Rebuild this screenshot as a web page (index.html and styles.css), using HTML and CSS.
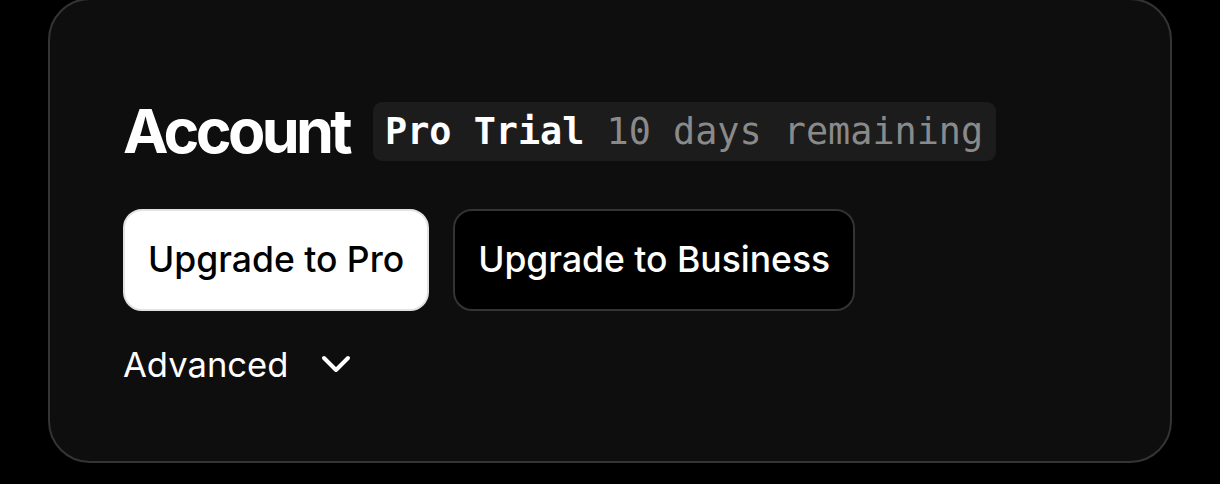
FILE: index.html
```html
<!DOCTYPE html>
<html lang="en">
<head>
<meta charset="utf-8">
<title>Account</title>
<link rel="stylesheet" href="styles.css">
</head>
<body>
  <section class="card">
    <div class="title-row">
      <h1 class="title">Account</h1>
      <div class="badge"><span class="plan">Pro Trial</span> <span class="remaining">10 days remaining</span></div>
    </div>
    <div class="actions">
      <button class="btn btn-light">Upgrade to Pro</button>
      <button class="btn btn-dark">Upgrade to Business</button>
    </div>
    <div class="advanced">
      <span class="advanced-label">Advanced</span>
      <svg class="chevron" width="30" height="20" viewBox="0 0 30 20" aria-hidden="true">
        <path d="M3 4 L15 16 L27 4" fill="none" stroke="#ffffff" stroke-width="4" stroke-linecap="round" stroke-linejoin="round"/>
      </svg>
    </div>
  </section>
</body>
</html>
```
FILE: styles.css
```css
html, body {
  margin: 0;
  padding: 0;
  background: #000000;
}
body {
  font-family: Inter, "Liberation Sans", sans-serif;
  color: #ffffff;
  height: 484px;
  overflow: hidden;
}
.card {
  margin: -2px 48px 0 48px;
  background: #0e0e0e;
  border: 2px solid #343434;
  border-radius: 42px;
  padding: 100px 73px 75px 73px;
  display: flex;
  flex-direction: column;
}
.title-row {
  display: flex;
  align-items: center;
  gap: 24px;
  height: 62px;
}
.title {
  margin: 0;
  font-size: 61px;
  line-height: 62px;
  font-weight: 700;
  letter-spacing: -0.06em;
}
.badge {
  background: #1c1c1c;
  border-radius: 9px;
  height: 59px;
  line-height: 59px;
  padding: 0 13px 0 12px;
  white-space: pre;
  font-family: "DejaVu Sans Mono", "Liberation Mono", monospace;
  font-size: 36.8px;
}
.plan {
  font-weight: 700;
  color: #ffffff;
}
.remaining {
  color: #8a8a8a;
}
.actions {
  display: flex;
  gap: 24px;
  margin-top: 47px;
}
.btn {
  font-family: Inter, "Liberation Sans", sans-serif;
  font-size: 35.5px;
  font-weight: 500;
  line-height: 46px;
  padding: 26px 23px;
  border-radius: 19px;
  border: 2px solid;
  cursor: pointer;
}
.btn-light {
  background: #ffffff;
  color: #000000;
  border-color: #e2e2e2;
}
.btn-dark {
  background: #000000;
  color: #ffffff;
  border-color: #333333;
}
.advanced {
  display: flex;
  align-items: center;
  gap: 33px;
  margin-top: 31px;
  height: 44px;
}
.advanced-label {
  font-size: 34.6px;
  line-height: 44px;
}
.chevron {
  display: block;
}
```
